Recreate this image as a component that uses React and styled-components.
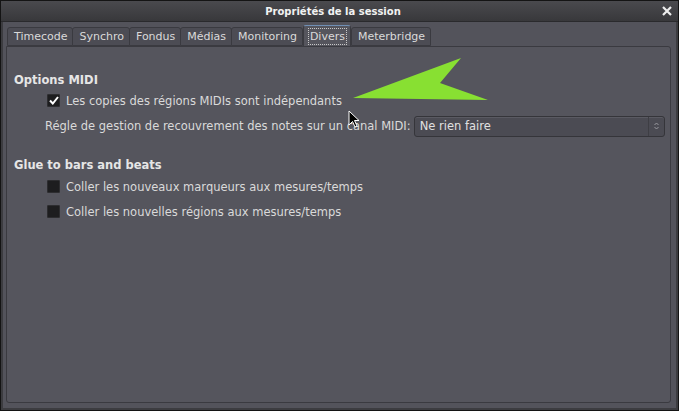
import React from "react"
import styled, { createGlobalStyle } from "styled-components"

const GlobalStyle = createGlobalStyle`
  html, body {
    margin: 0;
    padding: 0;
    background: #1c1c1c;
  }
  body {
    font-family: "DejaVu Sans", "Liberation Sans", sans-serif;
    font-size: 11.5px;
  }
`

const Window = styled.div`
  position: relative;
  width: 679px;
  height: 411px;
  box-sizing: border-box;
  border: 1px solid #141414;
  background: #3c3c40;
  display: flex;
  flex-direction: column;
  overflow: hidden;
`

const TitleBar = styled.div`
  height: 20px;
  flex-shrink: 0;
  display: flex;
  align-items: center;
  justify-content: center;
  padding-right: 13px;
  position: relative;
  background: linear-gradient(#4a4a4e, #38383b);
  border-bottom: 1px solid #2a2a2d;
  color: #f2f2f2;
  font-weight: bold;
  font-size: 10px;
`

const CloseBtn = styled.svg`
  position: absolute;
  right: 6px;
  top: 5px;
`

const Body = styled.div`
  flex: 1;
  margin: 0 2px 2px 2px;
  background: #53535b;
  display: flex;
  flex-direction: column;
  padding: 0 5px 5px 3px;
`

const TabRow = styled.div`
  display: flex;
  align-items: flex-end;
  height: 24px;
  padding-left: 1px;
`

const Tab = styled.div`
  height: ${p => (p.active ? "21px" : "19px")};
  box-sizing: border-box;
  padding: 0 5px 0 6px;
  display: flex;
  align-items: center;
  font-size: 11px;
  color: #dadada;
  background: ${p => (p.active ? "#55555d" : "#4c4c54")};
  border: 1px solid #3a3a40;
  border-bottom: ${p => (p.active ? "none" : "1px solid #3a3a40")};
  border-top: ${p => (p.active ? "1px solid #6f8fb5" : "1px solid #3a3a40")};
  border-radius: 3px 3px 0 0;
  margin-right: ${p => (p.active ? "0" : "-1px")};
  margin-left: ${p => (p.active ? "1px" : "0")};
`

const FocusText = styled.span`
  outline: 1px dotted #c8c8c8;
  outline-offset: 1px;
`

const Panel = styled.div`
  flex: 1;
  background: #55555d;
  border: 1px solid #3a3a40;
  border-radius: 0 3px 3px 3px;
  padding: 25px 5px 0 7px;
  color: #dadada;
`

const Header = styled.div`
  font-weight: bold;
  line-height: 16px;
  color: #e6e6e6;
  margin-top: ${p => p.top || "0"};
`

const Row = styled.div`
  display: flex;
  align-items: center;
  height: ${p => p.h || "25px"};
  padding-left: ${p => p.indent || "33px"};
  margin-top: ${p => p.top || "0"};
`

const Check = styled.div`
  width: 13px;
  height: 13px;
  box-sizing: border-box;
  background: #1d1d1f;
  border: 1px solid #2d2d30;
  border-radius: 1px;
  margin-right: 6px;
  display: flex;
  align-items: center;
  justify-content: center;
`

const Combo = styled.div`
  flex: 1;
  height: 21px;
  box-sizing: border-box;
  margin-left: 3px;
  display: flex;
  align-items: center;
  background: #4b4b53;
  border: 1px solid #35353a;
  border-radius: 3px;
  box-shadow: inset 0 1px 0 #5a5a62;
`

const ComboText = styled.span`
  flex: 1;
  padding-left: 5px;
  color: #e0e0e0;
`

const ComboArrows = styled.div`
  width: 15px;
  height: 100%;
  border-left: 1px solid #3e3e44;
  display: flex;
  align-items: center;
  justify-content: center;
`

const Overlay = styled.svg`
  position: absolute;
  left: 0;
  top: 0;
  pointer-events: none;
`

function CheckBox({ checked }) {
  return (
    <Check>
      {checked && (
        <svg width="10" height="9" viewBox="0 0 10 9">
          <path d="M1 4.5 L3.8 7.5 L9 1" stroke="#ffffff" strokeWidth="2" fill="none" />
        </svg>
      )}
    </Check>
  )
}

const TABS = ["Timecode", "Synchro", "Fondus", "Médias", "Monitoring", "Divers", "Meterbridge"]

export default function App() {
  return (
    <>
      <GlobalStyle />
      <Window>
        <TitleBar>
          Propriétés de la session
          <CloseBtn width="10" height="10" viewBox="0 0 10 10">
            <path d="M1 1 L9 9 M9 1 L1 9" stroke="#eeeeee" strokeWidth="2.2" />
          </CloseBtn>
        </TitleBar>
        <Body>
          <TabRow>
            {TABS.map(t =>
              t === "Divers" ? (
                <Tab key={t} active>
                  <FocusText>{t}</FocusText>
                </Tab>
              ) : (
                <Tab key={t}>{t}</Tab>
              )
            )}
          </TabRow>
          <Panel>
            <Header>Options MIDI</Header>
            <Row>
              <CheckBox checked />
              Les copies des régions MIDIs sont indépendants
            </Row>
            <Row indent="31px" h="26px">
              Régle de gestion de recouvrement des notes sur un canal MIDI:
              <Combo>
                <ComboText>Ne rien faire</ComboText>
                <ComboArrows>
                  <svg width="5" height="8" viewBox="0 0 5 8">
                    <path d="M0.5 3 L2.5 1 L4.5 3 M0.5 5 L2.5 7 L4.5 5" stroke="#9a9aa0" fill="none" />
                  </svg>
                </ComboArrows>
              </Combo>
            </Row>
            <Header top="18px">Glue to bars and beats</Header>
            <Row top="1px">
              <CheckBox />
              Coller les nouveaux marqueurs aux mesures/temps
            </Row>
            <Row>
              <CheckBox />
              Coller les nouvelles régions aux mesures/temps
            </Row>
          </Panel>
        </Body>
        <Overlay width="679" height="411">
          <polygon points="352,97 460,57 439,82 487,99" fill="#88e032" />
          <path
            d="M348 110 L348 124 L351.5 120.5 L354 126 L356 125 L353.5 119.5 L358 119.5 Z"
            fill="#000000"
            stroke="#ffffff"
            strokeWidth="1"
          />
        </Overlay>
      </Window>
    </>
  )
}
